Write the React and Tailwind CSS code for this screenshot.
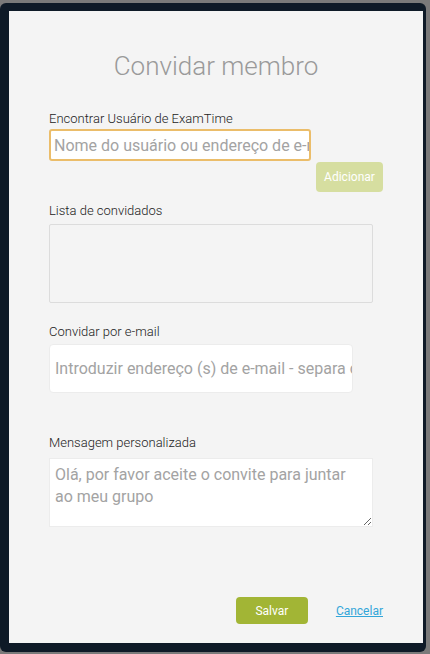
import React, { useState } from "react";

export default function App() {
  const [username, setUsername] = useState("");
  const [emails, setEmails] = useState("");
  const [message, setMessage] = useState("");

  return (
    <div className="w-[430px] h-[654px] bg-[#7a7a7a] pt-[3px] pr-[4px] pb-[2px] font-['Roboto',sans-serif]">
      <div className="h-full rounded-md bg-[#0e1a27] pl-[9px] pt-[8px] pr-[3px] pb-[9px]">
        <div className="h-full bg-[#f4f4f4] px-[40px] flex flex-col">
          {/* Title */}
          <h1 className="mt-[40px] text-center text-[26px] leading-[30px] font-light text-[#9a9a9a]">
            Convidar membro
          </h1>

          {/* Find user */}
          <label className="mt-[31px] text-[13px] leading-[14px] font-light text-[#222]">
            Encontrar Usuário de ExamTime
          </label>
          <input
            type="text"
            value={username}
            onChange={(e) => setUsername(e.target.value)}
            placeholder="Nome do usuário ou endereço de e-mail"
            className="mt-[3px] w-[262px] h-[32px] rounded-[3px] border-2 border-[#ebbd6a] bg-white pl-[3px] text-[16px] text-[#555] placeholder:text-[#a3a3a3] outline-none"
          />
          <button
            type="button"
            disabled
            className="mt-[1px] self-end w-[67px] h-[30px] rounded-[4px] bg-[#d6dea0] text-[12px] text-white"
          >
            Adicionar
          </button>

          {/* Invite list */}
          <label className="mt-[12px] text-[13px] leading-[14px] font-light text-[#222]">
            Lista de convidados
          </label>
          <div className="mt-[6px] w-[324px] h-[79px] rounded-[2px] border border-[#dcdcdc]" />

          {/* Invite by email */}
          <label className="mt-[22px] text-[13px] leading-[14px] font-light text-[#222]">
            Convidar por e-mail
          </label>
          <input
            type="text"
            value={emails}
            onChange={(e) => setEmails(e.target.value)}
            placeholder="Introduzir endereço (s) de e-mail - separa com vírgulas"
            className="mt-[5px] w-[304px] h-[49px] rounded-[4px] border border-[#ececec] bg-white pl-[5px] text-[16px] text-[#555] placeholder:text-[#a3a3a3] outline-none"
          />

          {/* Message */}
          <label className="mt-[43px] text-[13px] leading-[14px] font-light text-[#222]">
            Mensagem personalizada
          </label>
          <textarea
            value={message}
            onChange={(e) => setMessage(e.target.value)}
            placeholder="Olá, por favor aceite o convite para juntar ao meu grupo"
            className="mt-[8px] w-[324px] h-[69px] border border-[#ececec] bg-white px-[5px] pt-[5px] text-[16px] leading-[22px] text-[#555] placeholder:text-[#a3a3a3] outline-none"
          />

          {/* Actions */}
          <div className="mt-[70px] flex items-center justify-end gap-[28px]">
            <button
              type="button"
              className="w-[72px] h-[27px] rounded-[4px] bg-[#a2b535] text-[12px] text-white"
            >
              Salvar
            </button>
            <a href="#" className="text-[12px] text-[#33a6d9] underline">
              Cancelar
            </a>
          </div>
        </div>
      </div>
    </div>
  );
}
